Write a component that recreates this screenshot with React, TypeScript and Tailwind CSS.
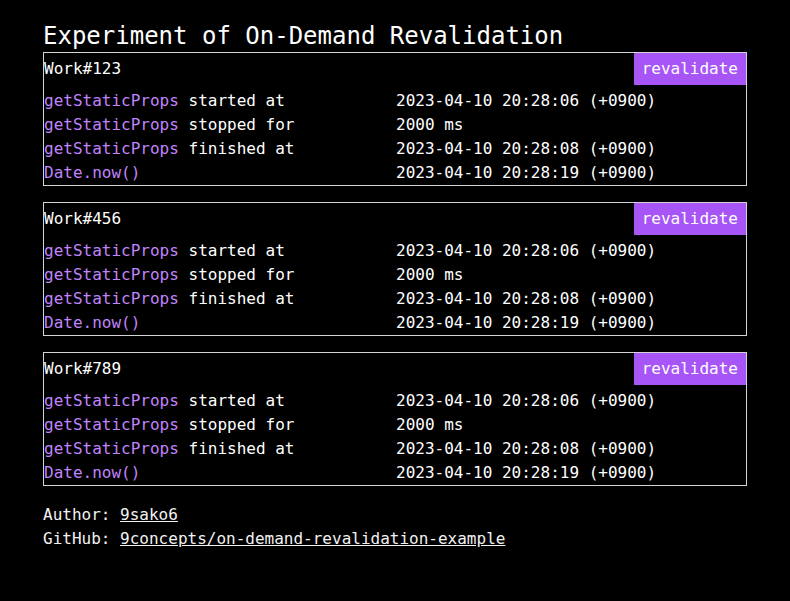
const works = ["123", "456", "789"];

const mono = "font-['DejaVu_Sans_Mono','Liberation_Mono',monospace]";

const WorkCard = ({ id }: { id: string }) => {
  const rows = [
    { fn: "getStaticProps", label: " started at", value: "2023-04-10 20:28:06 (+0900)" },
    { fn: "getStaticProps", label: " stopped for", value: "2000 ms" },
    { fn: "getStaticProps", label: " finished at", value: "2023-04-10 20:28:08 (+0900)" },
    { fn: "Date.now()", label: "", value: "2023-04-10 20:28:19 (+0900)" },
  ];
  return (
    <section className="border border-[#d4d4d4]">
      <div className="flex items-center justify-between">
        <h2 className="leading-6">Work#{id}</h2>
        <button className="bg-[#a855f7] px-2 leading-8 text-white">
          revalidate
        </button>
      </div>
      <div className="mt-[4px] grid grid-cols-[352px_1fr]">
        {rows.map((row, i) => (
          <div key={i} className="contents">
            <div className="leading-6 whitespace-pre">
              <span className="text-[#c084fc]">{row.fn}</span>
              {row.label}
            </div>
            <div className="leading-6">{row.value}</div>
          </div>
        ))}
      </div>
    </section>
  );
};

export default function App() {
  return (
    <div className={`min-h-[601px] bg-black text-white ${mono} text-[16px]`}>
      <main className="mx-[43px] pt-[20px]">
        <h1 className="text-[24px] leading-8">
          Experiment of On-Demand Revalidation
        </h1>
        <div className="flex flex-col gap-[16px]">
          {works.map((id) => (
            <WorkCard key={id} id={id} />
          ))}
        </div>
        <footer className="mt-[17px] text-[#f2f2f2]">
          <p className="leading-6">
            Author: <a className="underline">9sako6</a>
          </p>
          <p className="leading-6">
            GitHub:{" "}
            <a className="underline">9concepts/on-demand-revalidation-example</a>
          </p>
        </footer>
      </main>
    </div>
  );
}
